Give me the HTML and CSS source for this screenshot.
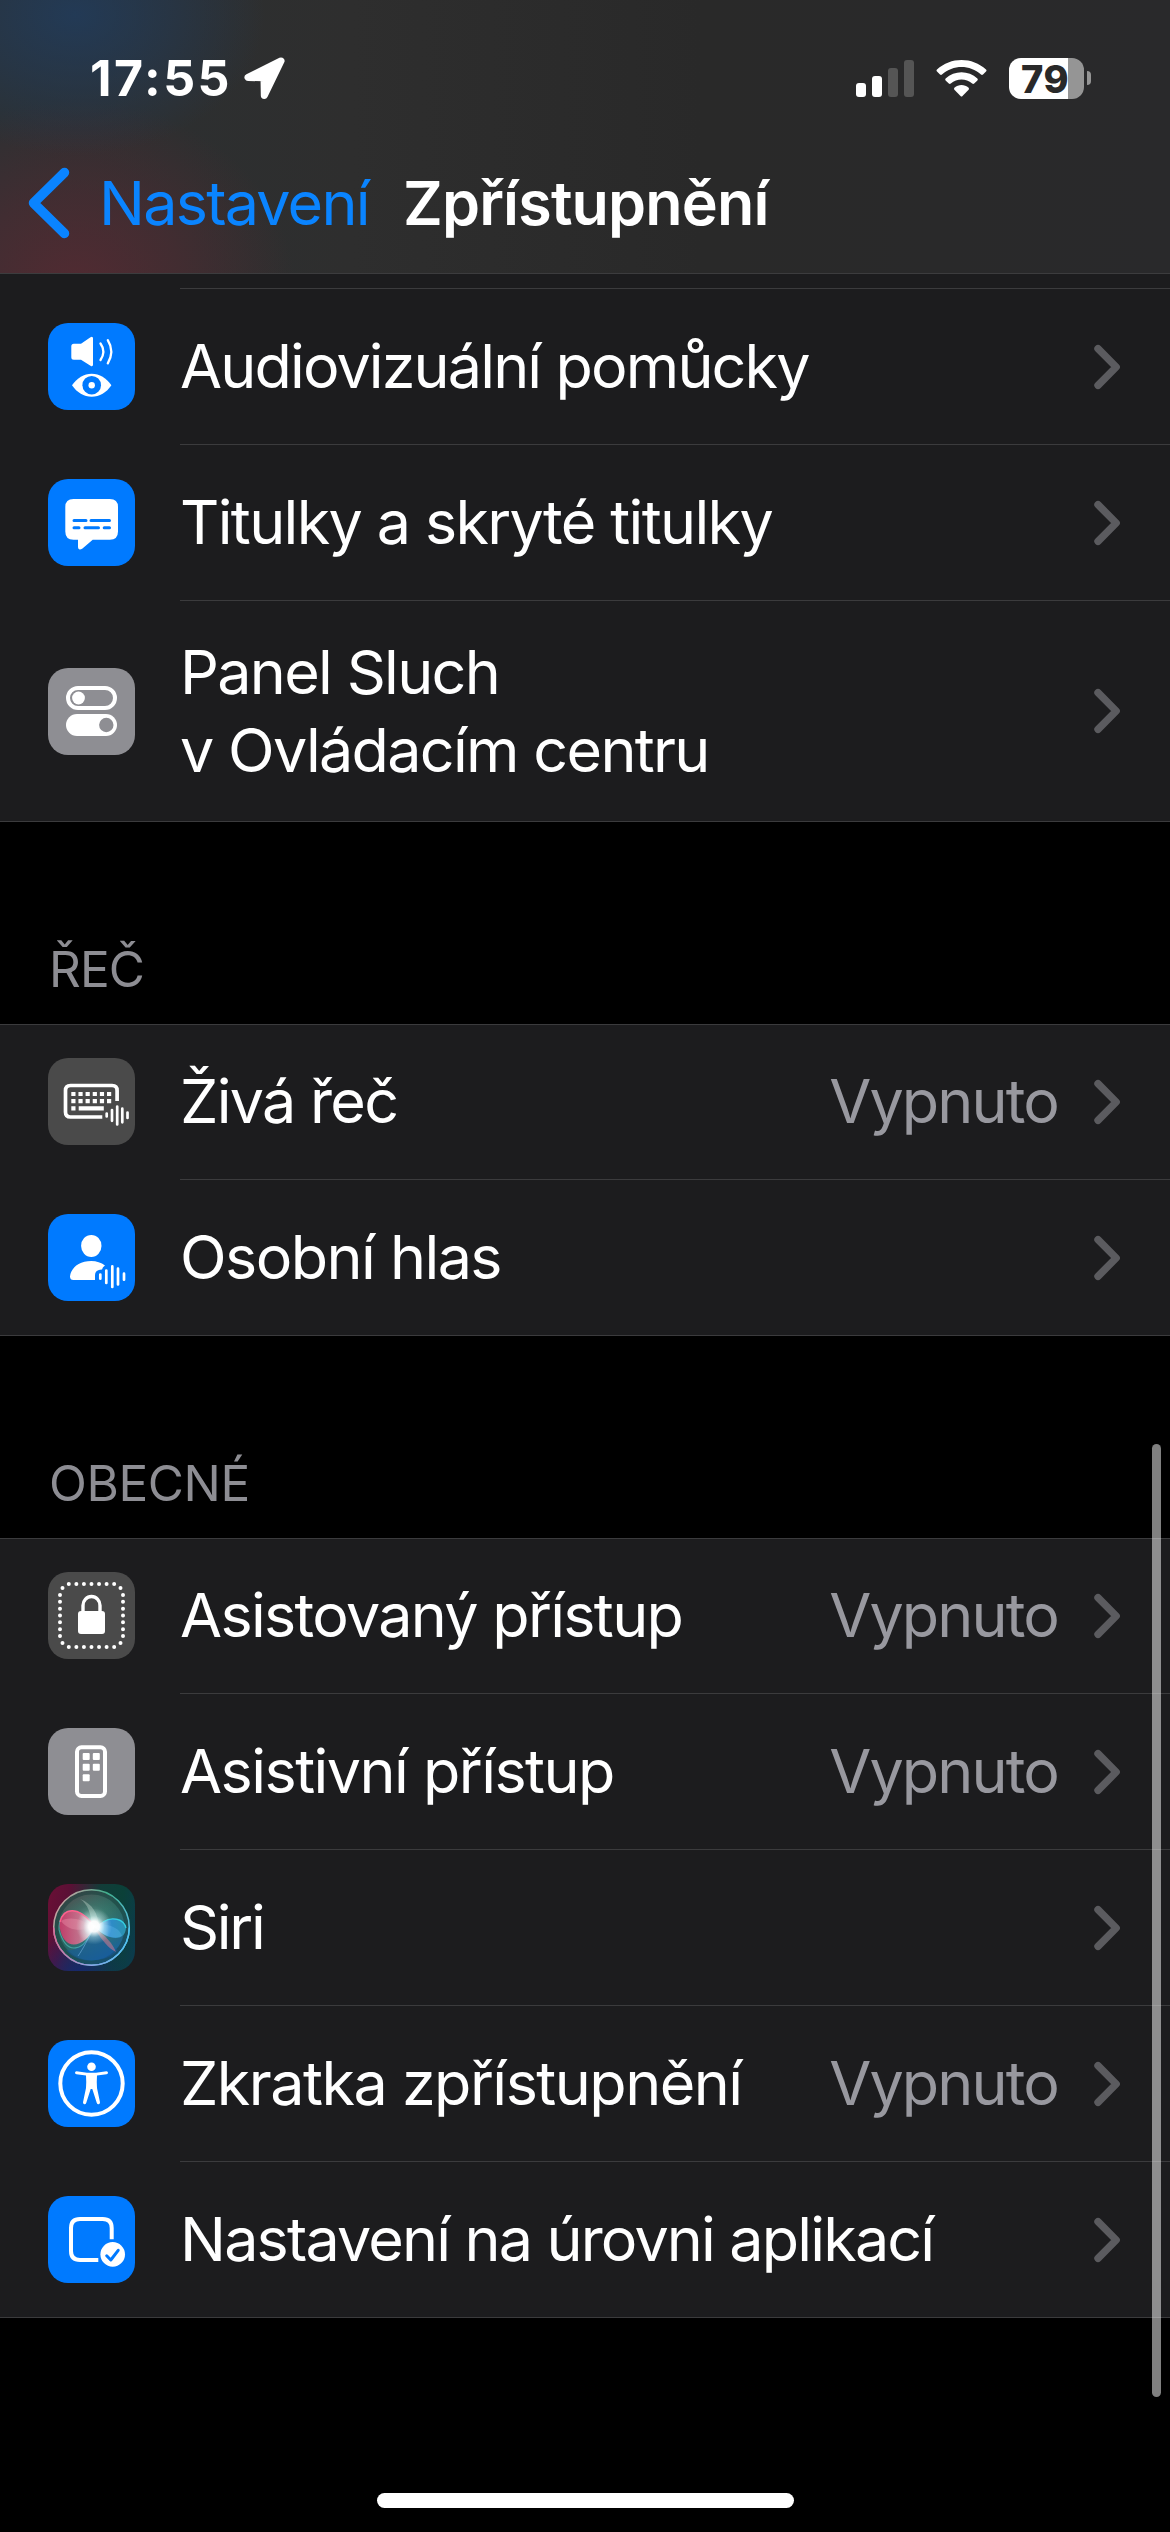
FILE: index.html
```html
<!DOCTYPE html>
<html lang="cs">
<head>
<meta charset="utf-8">
<title>Zpřístupnění</title>
<link rel="stylesheet" href="styles.css">
</head>
<body>
<svg class="defs" aria-hidden="true">
  <symbol id="chevron" viewBox="0 0 28 46"><path d="M5 4.700L23.200 23 5 41.300" fill="none" stroke="#5b5b5f" stroke-width="7.400" stroke-linecap="round" stroke-linejoin="round"/></symbol>
</svg>
<div class="screen">
  <header class="header">
    <div class="status">
      <span class="time">17:55</span>
      <svg class="location" width="44" height="44" viewBox="0 0 44 44"><path d="M38 4L5 20.500L21 20.800L21.300 38.500Z" fill="#fff" stroke="#fff" stroke-width="7" stroke-linejoin="round"/></svg>
      <svg class="signal" width="58" height="37" viewBox="0 0 58 37"><g fill="#fff"><rect y="23" width="10" height="14" rx="3"/><rect x="16" y="16" width="10" height="21" rx="3"/></g><g fill="#555"><rect x="32" y="8" width="10" height="29" rx="3"/><rect x="48" width="10" height="37" rx="3"/></g></svg>
      <svg class="wifi" width="51" height="37" viewBox="0 0 51 37"><g fill="#fff"><path d="M1 9.600C14.500-3.200 36.500-3.200 50 9.600Q51 10.600 50 11.600L47 14.600Q46 15.500 45 14.600C34 4.600 17 4.600 6 14.600Q5 15.500 4 14.600L1 11.600Q0 10.600 1 9.600Z"/><path d="M9.600 18.500C18.500 10.300 32.500 10.300 41.400 18.500Q42.300 19.500 41.400 20.500L38.200 23.600Q37.200 24.500 36.200 23.600C30 18.200 21 18.200 14.800 23.600Q13.800 24.500 12.800 23.600L9.600 20.500Q8.700 19.500 9.600 18.500Z"/><path d="M18.400 27.800C22.500 24.200 28.500 24.200 32.600 27.800Q33.500 28.800 32.600 29.800L26.500 36Q25.500 37 24.500 36L18.400 29.800Q17.500 28.800 18.400 27.800Z"/></g></svg>
      <div class="battery"><span class="battery-level">79</span></div>
      <span class="battery-cap"></span>
    </div>
    <nav class="nav">
      <svg class="back" width="44" height="72" viewBox="0 0 44 72"><path d="M37.500 5.500L6.500 36L37.500 66.500" fill="none" stroke="#0a84ff" stroke-width="9.500" stroke-linecap="round" stroke-linejoin="round"/></svg>
      <a class="back-label">Nastavení</a>
      <h1 class="title">Zpřístupnění</h1>
    </nav>
  </header>

  <main>
    <section class="group group-first">
      <div class="stub"></div>
      <div class="row">
        <svg class="icon blue" viewBox="0 0 87 87"><path d="M25.800 20.700H33L42.500 14.200Q45 12.800 45 15.500V41.500Q45 44.200 42.500 42.700L33 36.700H25.800Q23.300 36.700 23.300 34.200V23.200Q23.300 20.700 25.800 20.700Z" fill="#fff"/><path d="M52.500 20.500Q58.200 28.500 52.500 37M59.800 17.200Q66.800 28.500 59.800 40.300" fill="none" stroke="#fff" stroke-width="2.300" stroke-linecap="round"/><path d="M24 62.200C29 55 36 50.700 43.700 50.700S58.500 55 63.400 62.200C58.500 69.500 51.500 73.700 43.700 73.700S29 69.500 24 62.200Z" fill="#fff"/><circle cx="43.700" cy="62.200" r="9.300" fill="#007aff"/><circle cx="43.700" cy="62.200" r="3.200" fill="#fff"/></svg>
        <div class="row-body"><span class="label ls-audio">Audiovizuální pomůcky</span><svg class="chevron"><use href="#chevron"/></svg></div>
      </div>
      <div class="row">
        <svg class="icon blue" viewBox="0 0 87 87"><path d="M25.500 20H61.800Q70 20 70 28V52.500Q70 60.700 61.800 60.700H44.700L34.500 69.600Q30 72 30 67.500V60.700H25.500Q17.300 60.700 17.300 52.500V28Q17.300 20 25.500 20Z" fill="#fff"/><path d="M26 41.500H38M43 41.500H61.500M26 48.800H31M37 48.800H50.500M56.200 48.800H61.500" stroke="#007aff" stroke-width="3" stroke-linecap="round"/></svg>
        <div class="row-body"><span class="label ls-titles">Titulky a skryté titulky</span><svg class="chevron"><use href="#chevron"/></svg></div>
      </div>
      <div class="row tall last">
        <svg class="icon gray" viewBox="0 0 87 87"><rect x="20" y="20" width="47" height="20" rx="10" fill="none" stroke="#fff" stroke-width="4"/><circle cx="30.500" cy="30" r="6.400" fill="#fff"/><rect x="18" y="46" width="51" height="22" rx="11" fill="#fff"/><circle cx="58.300" cy="57" r="7.200" fill="#8e8e93"/></svg>
        <div class="row-body"><span class="label">Panel Sluch<br>v Ovládacím centru</span><svg class="chevron"><use href="#chevron"/></svg></div>
      </div>
    </section>

    <h2 class="section-title ls-speech">ŘEČ</h2>
    <section class="group">
      <div class="row">
        <svg class="icon dark" viewBox="0 0 87 87"><path d="M69.100 43V32.500Q69.100 27.500 64.100 27.500H22.500Q17.500 27.500 17.500 32.500V54Q17.500 59 22.500 59H54.300" fill="none" stroke="#fff" stroke-width="3.700"/><g stroke="#fff" stroke-width="4.200"><path d="M23.300 36H63.200M23.300 43.200H63.200" stroke-dasharray="4.200 2.940"/><path d="M23.300 50.400H27.500M30.700 50.400H55.800"/></g><path d="M58.700 55.600V58.500M64 52V62.800M69.200 48.500V66.500M74.300 50.700V64.300M79.500 54.500V60" stroke="#fff" stroke-width="2.700" stroke-linecap="round"/></svg>
        <div class="row-body"><span class="label ls-live">Živá řeč</span><span class="value">Vypnuto</span><svg class="chevron"><use href="#chevron"/></svg></div>
      </div>
      <div class="row last">
        <svg class="icon blue" viewBox="0 0 87 87"><ellipse cx="43.300" cy="31.900" rx="10.200" ry="11" fill="#fff"/><path d="M25.500 66Q22 66 22 62.500C23 53.500 31.500 47 43.300 47C48.500 47 53.200 48.700 57 51.500Q54.500 53 54 55.500Q47 55.500 47 61.500V66Z" fill="#fff"/><path d="M52.300 60.600V64.700M58.300 56.600V69M64.300 52.400V73M70 54.700V70.400M76 59.700V65.700" stroke="#fff" stroke-width="2.700" stroke-linecap="round"/></svg>
        <div class="row-body"><span class="label ls-voice">Osobní hlas</span><svg class="chevron"><use href="#chevron"/></svg></div>
      </div>
    </section>

    <h2 class="section-title">OBECNÉ</h2>
    <section class="group">
      <div class="row">
        <svg class="icon dark" viewBox="0 0 87 87"><g fill="none" stroke="#fff" stroke-width="4" stroke-linecap="round"><path d="M20.800 12H66.500M20.800 75H66.500" stroke-dasharray="0 7.560"/><path d="M12 23V64.100M75 23V64.100" stroke-dasharray="0 6.830"/><path d="M14.500 16h0M72.500 16h0M14.500 71h0M72.500 71h0"/></g><rect x="30" y="39" width="27" height="23" rx="3" fill="#fff"/><path d="M35 40V33.500A8.500 9 0 0 1 52 33.500V40" fill="none" stroke="#fff" stroke-width="3.400"/></svg>
        <div class="row-body"><span class="label">Asistovaný přístup</span><span class="value">Vypnuto</span><svg class="chevron"><use href="#chevron"/></svg></div>
      </div>
      <div class="row">
        <svg class="icon gray" viewBox="0 0 87 87"><rect x="29" y="19.300" width="28" height="48.700" rx="4.500" fill="none" stroke="#fff" stroke-width="4"/><g fill="#fff"><rect x="34.700" y="25" width="7" height="7" rx="1"/><rect x="44.800" y="25" width="7" height="7" rx="1"/><rect x="34.700" y="35.800" width="7" height="7" rx="1"/><rect x="44.800" y="35.800" width="7" height="7" rx="1"/><rect x="34.700" y="46.300" width="7" height="7" rx="1"/></g></svg>
        <div class="row-body"><span class="label ls-assistive">Asistivní přístup</span><span class="value">Vypnuto</span><svg class="chevron"><use href="#chevron"/></svg></div>
      </div>
      <div class="row">
        <svg class="icon siri" viewBox="0 0 87 87">
          <defs>
            <linearGradient id="rim" x1="0" y1=".2" x2="1" y2=".7"><stop offset="0" stop-color="#d9a0a4"/><stop offset=".5" stop-color="#3fae8c"/><stop offset="1" stop-color="#5cc0ee"/></linearGradient>
            <linearGradient id="rimLow" x1="0" x2="1"><stop offset="0" stop-color="#d96a9c"/><stop offset=".5" stop-color="#8f9fe8"/><stop offset="1" stop-color="#4cc4f0"/></linearGradient>
            <radialGradient id="orb" cx=".5" cy=".45" r=".55"><stop offset="0" stop-color="#a4c4c4"/><stop offset=".45" stop-color="#3d746f"/><stop offset="1" stop-color="#23504e"/></radialGradient>
            <linearGradient id="orbTint" x1="0" y1="0" x2=".6" y2="1"><stop offset="0" stop-color="#7a3040" stop-opacity=".8"/><stop offset=".5" stop-color="#2d7a65" stop-opacity=".3"/><stop offset="1" stop-color="#1463ae" stop-opacity=".9"/></linearGradient>
            <linearGradient id="pink" x1="0" x2="1"><stop offset="0" stop-color="#d0386a"/><stop offset=".55" stop-color="#d0708e"/><stop offset="1" stop-color="#fff"/></linearGradient>
            <linearGradient id="sky" x1="0" x2="1"><stop offset="0" stop-color="#d8f6ff"/><stop offset=".45" stop-color="#2f8acb"/><stop offset="1" stop-color="#2a93b0"/></linearGradient>
            <radialGradient id="flare"><stop offset="0" stop-color="#fff"/><stop offset=".3" stop-color="#fff" stop-opacity=".95"/><stop offset=".6" stop-color="#dff" stop-opacity=".35"/><stop offset="1" stop-color="#dff" stop-opacity="0"/></radialGradient>
          </defs>
          <circle cx="43.500" cy="43.500" r="38" fill="url(#orb)"/><circle cx="43.500" cy="43.500" r="38" fill="url(#orbTint)"/>
          <circle cx="43.500" cy="43.500" r="35" fill="none" stroke="#153b3a" stroke-opacity=".5" stroke-width="4"/>
          <path d="M18 66C28 68 38 60 46 44C54 55 61 62 70 66C61 78 30 82 18 66Z" fill="#17599a" opacity=".55"/>
          <path d="M32 15C45 20 50 30 51 42L44 42C43 30 40 20 32 15Z" fill="#d8e8dc" opacity=".35"/>
          <path d="M11 43C12 22 30 17 46 42C34 68 16 70 11 43Z" fill="none" stroke="#55c6c4" stroke-width="1.200" opacity=".6" transform="rotate(-5 44 43)"/>
          <path d="M11.500 42C13 22 31 21 47 42.500C37 64 15 69 11.500 42Z" fill="url(#pink)" opacity=".9"/>
          <path d="M13 37C22 32 34 35 46 43C34 47 21 48 13 37Z" fill="#f3a0b4" opacity=".35"/>
          <path d="M12 38C16 22 31 24 43 38" fill="none" stroke="#ff5f8b" stroke-width="1.300"/>
          <path d="M47 43C59 33 76 30 78 44C77 58 60 57 47 43Z" fill="url(#sky)"/>
          <path d="M50 41C61 39 72 45 74 52C64 56 56 52 47 43" fill="#62b9f2" opacity=".35"/>
          <path d="M55 38C64 32 76 35 78 44" fill="none" stroke="#35cfe0" stroke-width="1.200"/>
          <path d="M49 46C57 51 65 60 68 68C61 65 54 56 48 47Z" fill="#d7788f" opacity=".55"/>
          <path d="M45 45C40 55 35 65 30 72" fill="none" stroke="#6aaada" stroke-width="1" opacity=".7"/>
          <circle cx="46" cy="42.500" r="18" fill="url(#flare)"/>
          <circle cx="43.500" cy="43.500" r="37.800" fill="none" stroke="url(#rim)" stroke-width="1.500"/>
          <path d="M5.700 43.500A37.800 37.800 0 0 0 81.300 43.500" fill="none" stroke="url(#rimLow)" stroke-width="1.500"/>
        </svg>
        <div class="row-body"><span class="label ls-siri">Siri</span><svg class="chevron"><use href="#chevron"/></svg></div>
      </div>
      <div class="row">
        <svg class="icon blue" viewBox="0 0 87 87"><circle cx="43.500" cy="43.500" r="31.200" fill="none" stroke="#fff" stroke-width="4"/><circle cx="43.500" cy="26.700" r="4.300" fill="#fff"/><path d="M28.500 31.200L39 32.700H48L58.500 31.200Q60 31.200 60 32.700Q60 34 58.500 34.200L49 35.500Q48.500 43 49 48L52 62.300Q52.200 64 50.700 64.300Q49.300 64.500 48.800 63L44.300 49H42.700L38.200 63Q37.700 64.500 36.300 64.300Q34.800 64 35 62.300L38 48Q38.500 43 38 35.500L28.500 34.200Q27 34 27 32.700Q27 31.200 28.500 31.200Z" fill="#fff"/></svg>
        <div class="row-body"><span class="label ls-shortcut">Zkratka zpřístupnění</span><span class="value">Vypnuto</span><svg class="chevron"><use href="#chevron"/></svg></div>
      </div>
      <div class="row last">
        <svg class="icon blue" viewBox="0 0 87 87"><path d="M63.700 43.300V32Q63.700 23 54.700 23H32Q23 23 23 32V55Q23 64 32 64H50.300" fill="none" stroke="#fff" stroke-width="4"/><circle cx="64.700" cy="58.400" r="12.300" fill="#fff"/><path d="M58.700 59.800L62.800 64L70.200 54.300" fill="none" stroke="#007aff" stroke-width="3" stroke-linecap="round" stroke-linejoin="round"/></svg>
        <div class="row-body"><span class="label ls-apps">Nastavení na úrovni aplikací</span><svg class="chevron"><use href="#chevron"/></svg></div>
      </div>
    </section>
  </main>
  <div class="scrollbar"></div>
  <div class="home-indicator"></div>
</div>
</body>
</html>
```
FILE: styles.css
```css
* { box-sizing: border-box; margin: 0; padding: 0; }

body {
  width: 1170px;
  background: #000;
  color: #fff;
  font-family: Inter, "Liberation Sans", sans-serif;
}

.defs { display: block; width: 0; height: 0; }

.screen {
  position: relative;
  width: 1170px;
  height: 2532px;
  overflow: hidden;
  background: #000;
}

/* Header */
.header {
  height: 274px;
  border-bottom: 1px solid #3c3c3e;
  background:
    radial-gradient(ellipse 190px 140px at 75px 15px, rgba(33, 60, 92, .85), rgba(33, 60, 92, .45) 50%, rgba(33, 60, 92, 0)),
    radial-gradient(ellipse 220px 190px at 75px 290px, rgba(86, 42, 50, .9), rgba(86, 42, 50, .5) 50%, rgba(86, 42, 50, 0)),
    linear-gradient(90deg, #2c3032 0, #2e2e2e 30%, #292929 60%, #29292b 100%);
}

.status {
  display: flex;
  align-items: center;
  height: 156px;
  padding-left: 90px;
}

.time {
  width: 153px;
  font-size: 50px;
  font-weight: 700;
  line-height: 60px;
  letter-spacing: 2.5px;
}

.location { margin-top: 1px; }
.signal { margin-left: 569px; }
.wifi { margin-left: 22px; }

.battery {
  width: 75px;
  height: 41px;
  margin-left: 22px;
  padding-left: 12px;
  border-radius: 12px;
  background: linear-gradient(90deg, #fff 59px, #959595 59px);
  color: #292929;
}

.battery-level {
  display: block;
  font-size: 38px;
  font-weight: 800;
  line-height: 42px;
  letter-spacing: .5px;
}

.battery-cap {
  width: 4px;
  height: 14px;
  margin-left: 3px;
  border-radius: 0 4px 4px 0;
  background: #959595;
}

.nav {
  display: flex;
  align-items: center;
  height: 94px;
  padding-left: 27px;
}

.back { flex: none; }

.back-label,
.title {
  font-size: 61px;
  line-height: 74px;
  white-space: nowrap;
}

.back-label {
  width: 304px;
  margin-left: 28px;
  color: #0a84ff;
  letter-spacing: -1.75px;
}

.title { font-weight: 600; letter-spacing: -.85px; }

/* Grouped lists */
.group {
  background: #1c1c1e;
  box-shadow: inset 0 1px #3b3b3d, inset 0 -1px #3b3b3d;
}

.group-first { box-shadow: inset 0 -1px #3b3b3d; }

.stub {
  height: 15px;
  margin-left: 180px;
  border-bottom: 1px solid #3b3b3d;
}

.row {
  display: flex;
  align-items: center;
  height: 156px;
  padding-left: 48px;
  gap: 45px;
}

.row.tall { height: 221px; }

.icon {
  flex: none;
  width: 87px;
  height: 87px;
  margin-bottom: 1px;
  border-radius: 20px;
}

.blue { background: #007aff; }
.gray { background: #8e8e93; }
.dark { background: #4a4a4a; }

.siri {
  background:
    radial-gradient(circle at 35% 105%, #16286e, transparent 45%),
    linear-gradient(100deg, #6b0f35 0, #5a1035 22%, #123c38 52%, #0b4038 75%, #0c3a50 100%);
}

.row-body {
  flex: 1;
  align-self: stretch;
  display: flex;
  align-items: center;
  padding: 0 49px 1px 0;
  border-bottom: 1px solid #3b3b3d;
}

.last .row-body { border-bottom-color: transparent; }

.label {
  flex: 1;
  font-size: 61px;
  line-height: 78px;
  letter-spacing: -1.68px;
  white-space: nowrap;
}

.value {
  margin-right: 35px;
  color: #98989f;
  font-size: 61px;
  line-height: 78px;
  letter-spacing: -1.85px;
}

.chevron {
  flex: none;
  width: 28px;
  height: 46px;
  margin-top: 1px;
}

.section-title {
  height: 202px;
  padding: 117px 49px 0;
  color: #8d8d93;
  font-size: 49.5px;
  font-weight: 400;
  line-height: 60px;
  letter-spacing: -.4px;
}

.ls-audio { letter-spacing: -1.85px; }
.ls-titles { letter-spacing: -1.64px; }
.ls-live { letter-spacing: -1.7px; }
.ls-voice { letter-spacing: -1.55px; }
.ls-assistive { letter-spacing: -1.53px; }
.ls-siri { letter-spacing: -2.3px; }
.ls-shortcut { letter-spacing: -1.5px; }
.ls-apps { letter-spacing: -1.82px; }
.ls-speech { letter-spacing: -.9px; }

/* Overlays */
.scrollbar {
  position: absolute;
  top: 1444px;
  right: 9px;
  width: 9px;
  height: 953px;
  border-radius: 5px;
  background: rgba(255, 255, 255, .5);
}

.home-indicator {
  position: absolute;
  bottom: 24px;
  left: 377px;
  width: 417px;
  height: 15px;
  border-radius: 8px;
  background: #fff;
}
```
